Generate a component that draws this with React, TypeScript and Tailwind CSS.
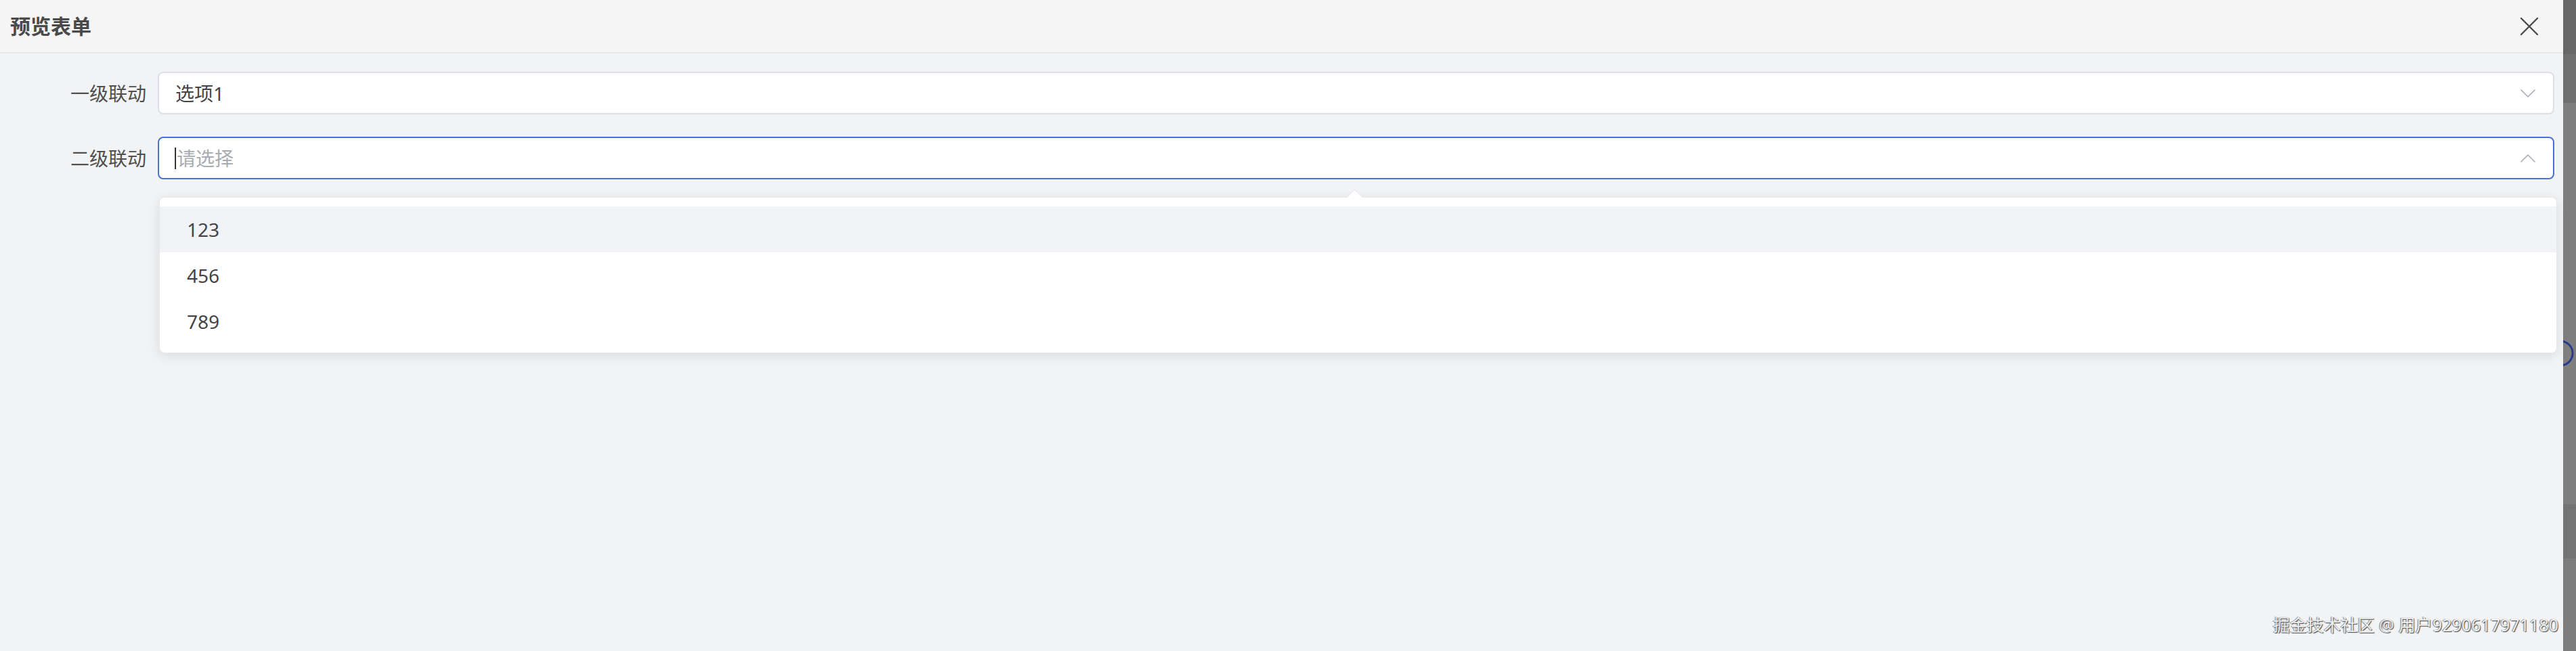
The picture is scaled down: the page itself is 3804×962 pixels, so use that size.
import React from 'react';

const font = { fontFamily: '"Noto Sans", "Noto Sans CJK SC", sans-serif' };

const Chevron: React.FC<{ up?: boolean }> = ({ up }) => (
  <svg width="22" height="12" viewBox="0 0 22 12" fill="none" className="shrink-0">
    <path
      d={up ? 'M1 11 L11 1 L21 11' : 'M1 1 L11 11 L21 1'}
      stroke="#a8abb2"
      strokeWidth="1.6"
      strokeLinecap="round"
      strokeLinejoin="round"
    />
  </svg>
);

const options = ['123', '456', '789'];

const App: React.FC = () => {
  return (
    <div className="w-[3804px] h-[962px] flex overflow-hidden" style={font}>
      <div className="relative flex-1 flex flex-col bg-[#f2f3f5]">
        {/* header */}
        <div className="h-[79px] shrink-0 flex items-center justify-between pl-[15px] pr-[36px] bg-[#f5f5f5] border-b-2 border-[#e6e7ea]">
          <span className="text-[30px] font-bold text-[#4a4a4a] leading-none">预览表单</span>
          <svg width="28" height="28" viewBox="0 0 28 28" fill="none">
            <path d="M2 2 L26 26 M26 2 L2 26" stroke="#4a4a4a" strokeWidth="2.4" strokeLinecap="round" />
          </svg>
        </div>

        {/* form */}
        <div className="pt-[27px] flex flex-col gap-[33px]">
          <div className="flex items-center">
            <label className="w-[216px] text-right text-[28px] text-[#4f4f4f]">一级联动</label>
            <div className="ml-[17px] mr-[13px] flex-1 h-[63px] flex items-center justify-between pl-[24px] pr-[26px] bg-white border-2 border-[#dcdfe4] rounded-[8px]">
              <span className="text-[28px] text-[#444]">选项1</span>
              <Chevron />
            </div>
          </div>

          <div className="relative flex items-center">
            <label className="w-[216px] text-right text-[28px] text-[#4f4f4f]">二级联动</label>
            <div className="ml-[17px] mr-[13px] flex-1 h-[63px] flex items-center justify-between pl-[23px] pr-[26px] bg-white border-2 border-[#4a72d4] rounded-[8px]">
              <span className="flex items-center text-[28px] text-[#a8abb2]">
                <span className="w-[2px] h-[32px] bg-[#333] mr-[1px]" />
                请选择
              </span>
              <Chevron up />
            </div>

            {/* dropdown */}
            <div className="absolute top-[89px] left-[235px] right-[9px] bg-white rounded-[8px] border border-[#e8e9ec] shadow-[0_4px_18px_rgba(0,0,0,0.10)] pt-[13px] pb-[12px] z-10">
              <div className="absolute -top-[9px] left-[1756px] w-[17px] h-[17px] rotate-45 bg-white border-t border-l border-[#e4e7ed]" />
              {options.map((o, i) => (
                <div
                  key={o}
                  className={`relative h-[68px] flex items-center pl-[40px] text-[28px] text-[#444] ${i === 0 ? 'bg-[#f2f3f6]' : ''}`}
                >
                  {o}
                </div>
              ))}
            </div>
          </div>
        </div>

        {/* watermark */}
        <div className="absolute right-[7px] bottom-[26px] text-[25px] text-[#eeeeee] leading-none [text-shadow:1px_1px_1px_#444,-1px_0_1px_#777]">
          掘金技术社区 @ 用户9290617971180
        </div>
      </div>

      {/* right overlay strip */}
      <div className="relative w-[19px] shrink-0 flex flex-col overflow-hidden">
        <div className="h-[80px] bg-[#676767]" />
        <div className="h-[72px] bg-[#6f6f6f]" />
        <div className="h-[593px] bg-[#7f7f7f]" />
        <div className="h-[80px] bg-[#747474]" />
        <div className="flex-1 bg-[#7c7c7c]" />
        <svg className="absolute left-[-24px] top-[502px]" width="40" height="40" viewBox="0 0 40 40" fill="none">
          <circle cx="20" cy="20" r="18" stroke="#263a8f" strokeWidth="3" />
        </svg>
      </div>
    </div>
  );
};

export default App;
